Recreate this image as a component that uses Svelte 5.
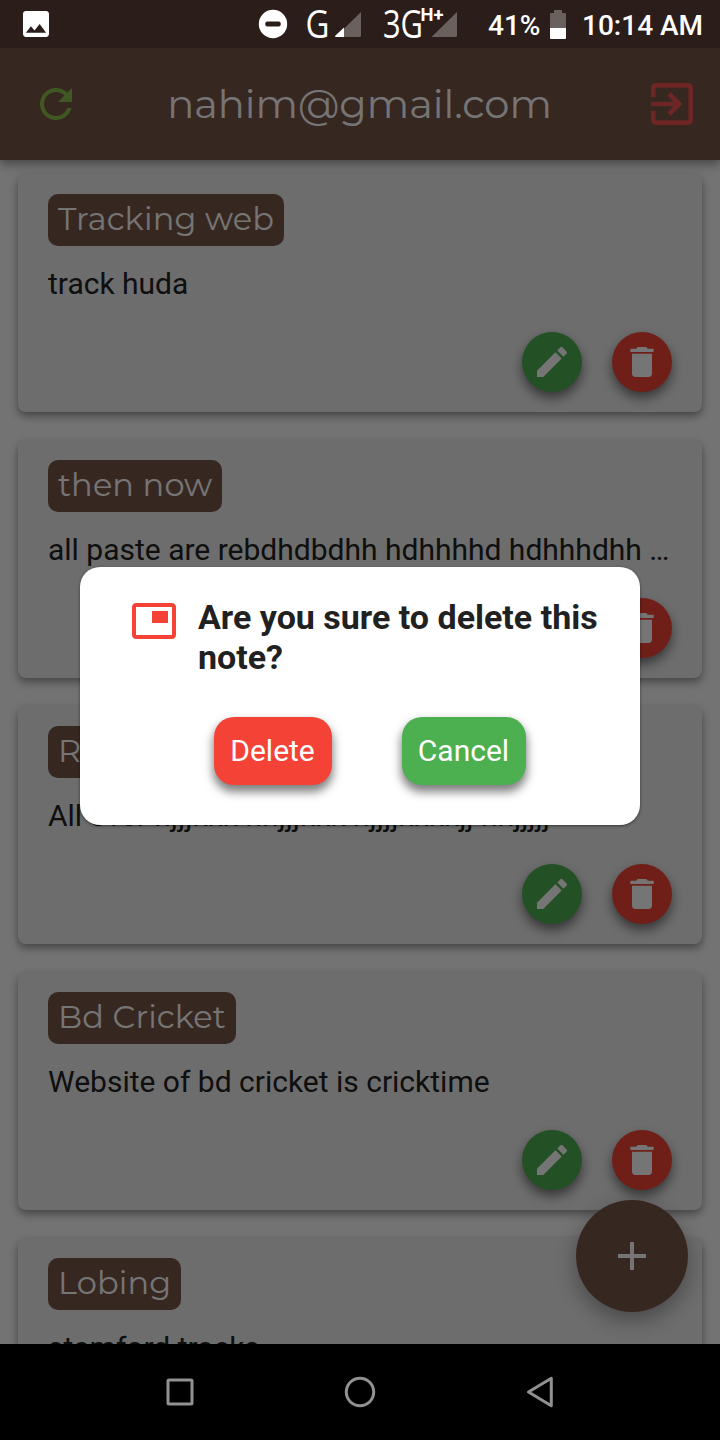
<script>
  const notes = [
    { title: 'Tracking web', body: 'track huda' },
    { title: 'then now', body: 'all paste are rebdhdbdhh hdhhhhd hdhhhdhh hdhhd' },
    { title: 'Reminder', body: 'All over hjjjkkk hhjjjkkk hjjjjkkkkjj hhjjjjj' },
    { title: 'Bd Cricket', body: 'Website of bd cricket is cricktime' },
    { title: 'Lobing', body: 'stamford tracks' }
  ];
</script>

<div class="screen">
  <div class="status">
    <svg class="picture" width="26" height="26" viewBox="3 3 18 18"><path d="M21 19V5c0-1.1-.9-2-2-2H5c-1.1 0-2 .9-2 2v14c0 1.1.9 2 2 2h14c1.1 0 2-.9 2-2zM8.500 13.500l2.500 3.010L14.500 12l4.500 6H5l3.500-4.500z" /></svg>
    <svg class="signals" width="200" height="48" viewBox="258 0 200 48">
      <circle cx="273" cy="24" r="14.200" />
      <rect x="265.300" y="21.600" width="15.400" height="4.800" rx="2" fill="#2a1d1a" />
      <text class="net" x="305.500" y="37.500" textLength="24" lengthAdjust="spacingAndGlyphs">G</text>
      <path d="M361 12v23.500a1.500 1.500 0 0 1-1.500 1.500H335.500z" fill="#6a605e" />
      <path d="M344 27.500V37h-8.500q-1-.8 0-1.500z" />
      <path d="M457 12v23.500a1.500 1.500 0 0 1-1.500 1.500H431.500z" fill="#6a605e" />
      <text class="net" x="383" y="37.500" textLength="40" lengthAdjust="spacingAndGlyphs">3G</text>
      <text class="hplus" x="420.500" y="21" textLength="23" lengthAdjust="spacingAndGlyphs">H+</text>
    </svg>
    <span class="percent">41%</span>
    <svg class="battery" width="16" height="29" viewBox="0 0 16 29">
      <path d="M4 0h8v3h3a1 1 0 0 1 1 1v14H0V4a1 1 0 0 1 1-1h3z" fill="#6a605e" />
      <path d="M0 18h16v10a1 1 0 0 1-1 1H1a1 1 0 0 1-1-1z" />
    </svg>
    <span class="clock">10:14 AM</span>
  </div>

  <div class="app">
    <header>
      <svg class="refresh" width="48" height="48" viewBox="0 0 24 24"><path d="M17.650 6.350C16.200 4.900 14.210 4 12 4c-4.420 0-7.990 3.580-7.990 8s3.570 8 7.990 8c3.730 0 6.840-2.550 7.730-6h-2.080c-.82 2.330-3.040 4-5.650 4-3.310 0-6-2.690-6-6s2.690-6 6-6c1.660 0 3.140.69 4.220 1.780L13 11h7V4l-2.350 2.350z" /></svg>
      <h1>nahim@gmail.com</h1>
      <svg class="exit" width="56" height="56" viewBox="0 0 24 24"><path d="M10.090 15.590L11.500 17l5-5-5-5-1.410 1.410L12.670 11H3v2h9.670l-2.580 2.590zM19 3H5c-1.110 0-2 .9-2 2v4h2V5h14v14H5v-4H3v4c0 1.100.89 2 2 2h14c1.100 0 2-.9 2-2V5c0-1.100-.9-2-2-2z" /></svg>
    </header>

    <main>
      {#each notes as note}
        <article>
          <h2>{note.title}</h2>
          <p>{note.body}</p>
          <div class="actions">
            <span class="round edit"><svg width="40" height="40" viewBox="0 0 24 24"><path d="M3 17.250V21h3.750L17.810 9.940l-3.750-3.750L3 17.250zM20.710 7.040c.39-.39.39-1.020 0-1.410l-2.340-2.340c-.39-.39-1.020-.39-1.410 0l-1.830 1.830 3.750 3.750 1.830-1.830z" /></svg></span>
            <span class="round remove"><svg width="40" height="40" viewBox="0 0 24 24"><path d="M6 19c0 1.100.9 2 2 2h8c1.100 0 2-.9 2-2V7H6v12zM19 4h-3.500l-1-1h-5l-1 1H5v2h14V4z" /></svg></span>
          </div>
        </article>
      {/each}
    </main>

    <div class="fab"><svg width="48" height="48" viewBox="0 0 24 24"><path d="M19 13h-6v6h-2v-6H5v-2h6V5h2v6h6v2z" /></svg></div>

    <div class="scrim">
      <section class="dialog">
        <div class="question">
          <svg width="48" height="48" viewBox="0 0 24 24"><path d="M19 7h-8v6h8V7zm2-4H3c-1.100 0-2 .9-2 2v14c0 1.100.9 1.980 2 1.980h18c1.100 0 2-.88 2-1.980V5c0-1.100-.9-2-2-2zm0 16.010H3V4.980h18v14.030z" /></svg>
          <h3>Are you sure to delete this note?</h3>
        </div>
        <div class="choices">
          <button class="delete">Delete</button>
          <button class="cancel">Cancel</button>
        </div>
      </section>
    </div>
  </div>

  <nav>
    <svg width="32" height="32" viewBox="0 0 32 32"><rect x="4" y="4" width="24" height="24" rx="1" /></svg>
    <svg width="32" height="32" viewBox="0 0 32 32"><circle cx="16" cy="16" r="13.700" /></svg>
    <svg width="32" height="32" viewBox="0 0 32 32"><path d="M27.300 2.300v27.400L4.500 16z" /></svg>
  </nav>
</div>

<style>
  :global(body) { background: #000; }
  .screen {
    width: 720px;
    height: 1440px;
    display: grid;
    grid-template-rows: 48px 1296px 96px;
    font-family: Roboto, sans-serif;
    overflow: hidden;
  }
  svg { display: block; flex: none; }
  .status {
    display: flex;
    align-items: center;
    background: #2a1d1a;
    color: #fff;
    fill: #fff;
    font-size: 28px;
    font-weight: 500;
    line-height: 44px;
    white-space: nowrap;
  }
  .picture { margin-left: 23px; }
  .signals { margin-left: 209px; overflow: visible; }
  .net { font-family: "Open Sans", sans-serif; font-size: 38px; font-weight: 400; }
  .hplus { font-family: Roboto, sans-serif; font-size: 19px; font-weight: 700; }
  .percent { width: 52px; margin-left: 30px; padding-top: 4px; }
  .battery { margin-left: 10px; }
  .clock { margin-left: 16px; padding-top: 4px; }

  .app {
    position: relative;
    overflow: hidden;
    background: #fafafa;
  }
  header {
    position: relative;
    height: 112px;
    display: flex;
    align-items: center;
    justify-content: space-between;
    padding: 0 20px 0 32px;
    background: #795548;
    box-shadow: 0 4px 10px rgba(0, 0, 0, 0.4);
  }
  .refresh { fill: #8bc34a; }
  .exit { fill: #ef5350; }
  h1, h2, h3, p { margin: 0; }
  h1, h2 {
    font-family: Montserrat, Inter, sans-serif;
    font-weight: 400;
    color: #fff;
    white-space: nowrap;
  }
  h1 { font-size: 40px; line-height: 48px; padding-right: 5px; }
  main {
    display: flex;
    flex-direction: column;
    gap: 28px;
    padding: 14px 18px;
  }
  article {
    height: 238px;
    flex: none;
    box-sizing: border-box;
    display: flex;
    flex-direction: column;
    align-items: flex-start;
    padding: 20px 30px;
    border-radius: 8px;
    background: #eee;
    box-shadow: 0 4px 8px rgba(0, 0, 0, 0.4);
  }
  h2 {
    height: 52px;
    box-sizing: border-box;
    padding: 0 10px;
    border-radius: 10px;
    background: #795548;
    font-size: 32px;
    line-height: 50px;
    letter-spacing: 0.130px;
  }
  p {
    width: 100%;
    margin-top: 20px;
    font-size: 30px;
    line-height: 36px;
    color: #222;
    white-space: nowrap;
    overflow: hidden;
    text-overflow: ellipsis;
  }
  .actions {
    display: flex;
    gap: 30px;
    align-self: flex-end;
    margin-top: auto;
  }
  .round, .fab {
    display: grid;
    place-items: center;
    border-radius: 50%;
    fill: #fff;
  }
  .round {
    width: 60px;
    height: 60px;
    box-shadow: 0 6px 12px rgba(0, 0, 0, 0.5);
  }
  .edit { background: #4caf50; }
  .remove { background: #f44336; }
  .fab {
    position: absolute;
    right: 32px;
    bottom: 32px;
    width: 112px;
    height: 112px;
    background: #795548;
    box-shadow: 0 8px 22px rgba(0, 0, 0, 0.35);
  }
  .scrim {
    position: absolute;
    inset: 0;
    display: grid;
    place-items: center;
    background: rgba(0, 0, 0, 0.54);
  }
  .dialog {
    width: 560px;
    height: 258px;
    box-sizing: border-box;
    padding: 30px 30px 40px 50px;
    display: flex;
    flex-direction: column;
    justify-content: space-between;
    border-radius: 20px;
    background: #fff;
    box-shadow: 0 1px 3px rgba(0, 0, 0, 0.5);
  }
  .question {
    display: flex;
    gap: 20px;
    fill: #f44336;
  }
  h3 {
    width: 410px;
    font-size: 34px;
    font-weight: 700;
    line-height: 40px;
    color: #212121;
  }
  .choices { display: flex; gap: 70px; margin-left: 84px; }
  button {
    height: 68px;
    padding: 0 1px 0 0;
    border: 0;
    border-radius: 20px;
    color: #fff;
    font: 400 30px/68px Roboto, sans-serif;
    box-shadow: 0 6px 10px 1px rgba(0, 0, 0, 0.5);
  }
  .delete { width: 118px; background: #f44336; }
  .cancel { width: 124px; background: #4caf50; }
  nav {
    display: flex;
    align-items: center;
    justify-content: center;
    gap: 148px;
    background: #000;
    fill: none;
    stroke: #919191;
    stroke-width: 3;
    stroke-linejoin: round;
  }
</style>
